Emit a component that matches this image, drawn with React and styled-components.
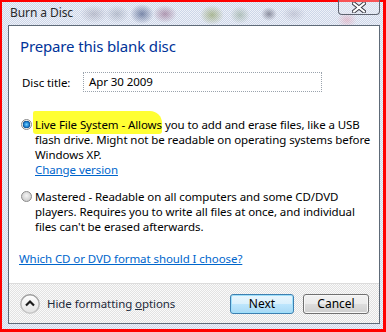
import React from "react";
import styled, { createGlobalStyle } from "styled-components";

const GlobalStyle = createGlobalStyle`
  html, body {
    margin: 0;
    padding: 0;
    background: #fff;
  }
  body {
    font-family: "Noto Sans", "Open Sans", sans-serif;
    font-size: 11.5px;
    letter-spacing: -0.08px;
    color: #000;
  }
`;

function CloseGlyph() {
  return (
    <svg width="14" height="11" viewBox="0 0 14 11">
      <path d="M2 1.5 L12 9.5 M12 1.5 L2 9.5" stroke="#3a3a44" strokeWidth="4" strokeLinecap="square" />
      <path d="M2 1.5 L12 9.5 M12 1.5 L2 9.5" stroke="#fff" strokeWidth="2" strokeLinecap="square" />
    </svg>
  );
}

function ChevronCircle() {
  return (
    <svg width="20" height="20" viewBox="0 0 20 20">
      <defs>
        <linearGradient id="ring" x1="0" y1="0" x2="0" y2="1">
          <stop offset="0" stopColor="#9a9a9a" />
          <stop offset="1" stopColor="#c8c8c8" />
        </linearGradient>
        <linearGradient id="face" x1="0" y1="0" x2="0" y2="1">
          <stop offset="0" stopColor="#ffffff" />
          <stop offset="1" stopColor="#e2e2e2" />
        </linearGradient>
      </defs>
      <circle cx="10" cy="10" r="9.2" fill="url(#face)" stroke="url(#ring)" strokeWidth="1.4" />
      <path d="M6 11.5 L10 7.5 L14 11.5" fill="none" stroke="#1b1b1b" strokeWidth="2.2" />
    </svg>
  );
}

export default function App() {
  return (
    <>
      <GlobalStyle />
      <Frame>
        <TitleBar>
          <Caption>Burn a Disc</Caption>
          <CloseButton>
            <CloseGlyph />
          </CloseButton>
        </TitleBar>
        <Client>
          <Body>
            <Heading>Prepare this blank disc</Heading>
            <FieldRow>
              <Label>Disc title:</Label>
              <TextBox>Apr 30 2009</TextBox>
            </FieldRow>
            <Option>
              <Radio checked />
              <OptionText>
                <Line>
                  <Marked>Live File System - Allows</Marked> you to add and erase files, like a USB
                </Line>
                <Line>flash drive. Might not be readable on operating systems before</Line>
                <Line>Windows XP.</Line>
                <Link href="#">Change version</Link>
              </OptionText>
            </Option>
            <Option>
              <Radio />
              <OptionText>
                <Line>Mastered - Readable on all computers and some CD/DVD</Line>
                <Line>players. Requires you to write all files at once, and individual</Line>
                <Line>files can't be erased afterwards.</Line>
              </OptionText>
            </Option>
            <HelpLink href="#">Which CD or DVD format should I choose?</HelpLink>
          </Body>
          <Footer>
            <Toggle>
              <ChevronCircle />
              <span>
                Hide formatting <u>o</u>ptions
              </span>
            </Toggle>
            <Buttons>
              <Button primary>Next</Button>
              <Button>Cancel</Button>
            </Buttons>
          </Footer>
        </Client>
      </Frame>
    </>
  );
}

const Frame = styled.div`
  width: 386px;
  height: 332px;
  box-sizing: border-box;
  border-style: solid;
  border-color: #ff0000;
  border-width: 2px 3px 3px 2px;
  padding: 0 3px 5px 6px;
  display: flex;
  flex-direction: column;
  background:
    radial-gradient(ellipse 14px 9px at 92px 12px, rgba(120, 120, 140, 0.35), transparent),
    radial-gradient(ellipse 12px 9px at 115px 12px, rgba(110, 120, 140, 0.35), transparent),
    radial-gradient(ellipse 12px 10px at 140px 12px, rgba(40, 60, 110, 0.55), transparent),
    radial-gradient(ellipse 12px 9px at 163px 12px, rgba(120, 60, 100, 0.45), transparent),
    radial-gradient(ellipse 12px 10px at 210px 13px, rgba(120, 140, 60, 0.5), transparent),
    radial-gradient(ellipse 10px 9px at 238px 13px, rgba(110, 140, 110, 0.4), transparent),
    radial-gradient(ellipse 8px 7px at 267px 12px, rgba(60, 60, 80, 0.5), transparent),
    radial-gradient(ellipse 12px 8px at 292px 12px, rgba(150, 150, 170, 0.35), transparent),
    radial-gradient(ellipse 10px 8px at 345px 18px, rgba(230, 140, 160, 0.4), transparent),
    repeating-conic-gradient(#cdd6e8 0 25%, #eef1f8 0 50%) 0 0 / 2px 2px;
`;

const TitleBar = styled.div`
  height: 23px;
  display: flex;
  align-items: flex-start;
  justify-content: space-between;
`;

const Caption = styled.div`
  font-size: 12px;
  line-height: 16px;
  color: #2a2a2a;
  padding: 3px 0 0 2px;
`;

const CloseButton = styled.div`
  width: 40px;
  height: 14px;
  margin-top: -2px;
  border: 1px solid #5f6470;
  border-top: none;
  border-radius: 0 0 4px 4px;
  display: flex;
  align-items: center;
  justify-content: center;
  background: rgba(235, 238, 245, 0.35);
`;

const Client = styled.div`
  flex: 1;
  display: flex;
  flex-direction: column;
  border: 1px solid #5e6a78;
  background: #fff;
`;

const Body = styled.div`
  flex: 1;
  padding: 10px 0 0 11px;
`;

const Heading = styled.div`
  font-size: 15px;
  letter-spacing: -0.15px;
  line-height: 20px;
  color: #003399;
`;

const FieldRow = styled.div`
  display: flex;
  align-items: center;
  margin-top: 16px;
  padding-left: 2px;
`;

const Label = styled.div`
  width: 61px;
`;

const TextBox = styled.div`
  width: 232px;
  height: 18px;
  line-height: 18px;
  border: 1px dotted #9aa3ad;
  padding-left: 5px;
`;

const Option = styled.div`
  display: flex;
  align-items: flex-start;
  margin-top: 25px;
  padding-left: 1px;

  & + & {
    margin-top: 12px;
  }
`;

const Radio = styled.span`
  flex: none;
  width: 11px;
  height: 11px;
  margin-top: 2px;
  margin-right: 3px;
  border-radius: 50%;
  box-sizing: border-box;
  border: 1px solid #8a8a8a;
  background: ${(p) =>
    p.checked
      ? "radial-gradient(circle at 50% 50%, #6fd0ff 0, #1b7fd0 2.5px, #0b4c8c 3.5px, #e8e8e8 4px, #f6f6f6 5px)"
      : "radial-gradient(circle at 50% 40%, #f4f4f4 0, #d0d0d0 5px)"};
`;

const OptionText = styled.div`
  line-height: 15px;
  white-space: nowrap;
`;

const Line = styled.div``;

const Marked = styled.span`
  background: #ffff33;
  padding: 6px 0 2px 2px;
  margin-left: -2px;
  border-radius: 2px 12px 3px 3px;
`;

const Link = styled.a`
  display: block;
  color: #0066cc;
  text-decoration: underline;
`;

const HelpLink = styled(Link)`
  margin-top: 17px;
  margin-left: -1px;
`;

const Footer = styled.div`
  height: 39px;
  border-top: 1px solid #dcdcdc;
  display: flex;
  align-items: center;
  justify-content: space-between;
  padding: 0 10px 0 11px;
  background: repeating-conic-gradient(#fafafa 0 25%, #e2e2e2 0 50%) 0 0 / 2px 2px;
`;

const Toggle = styled.div`
  display: flex;
  align-items: center;
  gap: 7px;
  color: #1e2a3a;
`;

const Buttons = styled.div`
  display: flex;
  gap: 9px;
`;

const Button = styled.button`
  width: ${(p) => (p.primary ? "64px" : "66px")};
  height: 20px;
  padding: 0;
  font-family: inherit;
  font-size: 12px;
  color: #000;
  border-radius: 3px;
  border: 1px solid ${(p) => (p.primary ? "#3c7fb1" : "#707070")};
  box-shadow: inset 0 0 0 1px ${(p) => (p.primary ? "#9fe0fb" : "#f8f8f8")};
  background: ${(p) =>
    p.primary
      ? "linear-gradient(#eaf6fd 0, #d9f0fc 50%, #bee6fd 50%, #a7d9f5 100%)"
      : "linear-gradient(#f2f2f2 0, #ebebeb 50%, #dddddd 50%, #cfcfcf 100%)"};
`;
